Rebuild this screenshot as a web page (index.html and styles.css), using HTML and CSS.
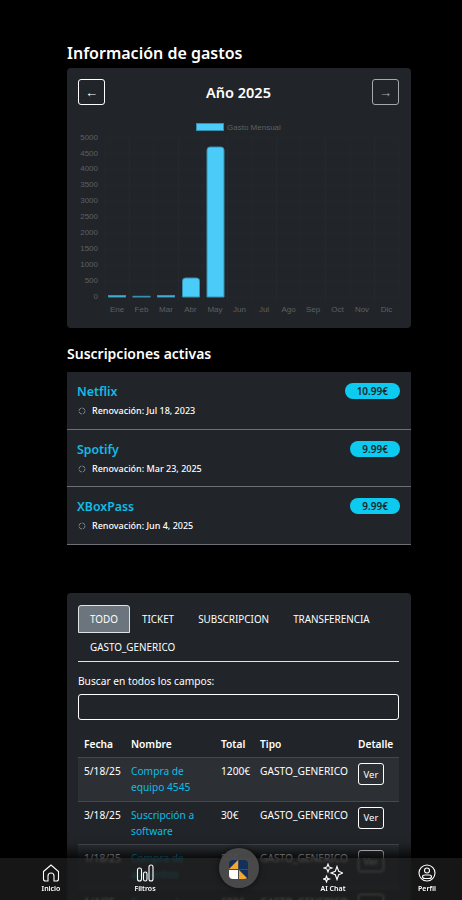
FILE: index.html
```html
<!DOCTYPE html>
<html lang="es">
<head>
  <meta charset="UTF-8" />
  <meta name="viewport" content="width=device-width, initial-scale=1.0"/>
  <title>Gastos</title>
  <link rel="stylesheet" href="styles.css">
</head>
<body>
  <main class="page">
    <h2 class="section-title first">Información de gastos</h2>

    <section class="card chart-card">
      <div class="year-bar">
        <button class="btn-outline">←</button>
        <h3 class="year-title">Año 2025</h3>
        <button class="btn-outline dim">→</button>
      </div>

      <!-- chart: plot area is x 27..321, y 22..182 -->
      <svg class="chart" width="322" height="206" viewBox="0 0 322 206">
        <g class="grid">
          <path d="M27 22H321M27 38H321M27 54H321M27 70H321M27 86H321M27 102H321M27 118H321M27 134H321M27 150H321M27 166H321M27 182H321"/>
          <path d="M27 22V186M51.500 22V186M76 22V186M100.500 22V186M125 22V186M149.500 22V186M174 22V186M198.500 22V186M223 22V186M247.500 22V186M272 22V186M296.500 22V186M321 22V186"/>
        </g>
        <rect class="bar" x="118.500" y="8.500" width="27" height="7"/>
        <text class="legend" x="149" y="15">Gasto Mensual</text>
        <g class="y-label">
          <text x="20" y="25">5000</text>
          <text x="20" y="41">4500</text>
          <text x="20" y="56">4000</text>
          <text x="20" y="72">3500</text>
          <text x="20" y="88">3000</text>
          <text x="20" y="104">2500</text>
          <text x="20" y="120">2000</text>
          <text x="20" y="136">1500</text>
          <text x="20" y="152">1000</text>
          <text x="20" y="168">500</text>
          <text x="20" y="184">0</text>
        </g>
        <g class="x-label">
          <text x="39" y="197">Ene</text>
          <text x="63.500" y="197">Feb</text>
          <text x="88" y="197">Mar</text>
          <text x="112.500" y="197">Abr</text>
          <text x="137" y="197">May</text>
          <text x="161.500" y="197">Jun</text>
          <text x="186" y="197">Jul</text>
          <text x="210.500" y="197">Ago</text>
          <text x="235" y="197">Sep</text>
          <text x="259.500" y="197">Oct</text>
          <text x="284" y="197">Nov</text>
          <text x="308.500" y="197">Dic</text>
        </g>
        <rect class="bar" x="30.500" y="180.500" width="17" height="1.500"/>
        <rect class="bar" x="55" y="181.300" width="17" height="0.700"/>
        <rect class="bar" x="79.500" y="180.500" width="17" height="1.500"/>
        <path class="bar" d="M104.500 182V166a3 3 0 0 1 3-3h11a3 3 0 0 1 3 3v16z"/>
        <path class="bar" d="M129 182V35a3 3 0 0 1 3-3h11a3 3 0 0 1 3 3v147z"/>
      </svg>
    </section>

    <h2 class="section-title small">Suscripciones activas</h2>

    <section class="subs">
      <div class="sub-row">
        <div class="sub-top">
          <span class="sub-name">Netflix</span>
          <span class="badge">10.99€</span>
        </div>
        <div class="sub-date">
          <svg class="spin" width="8" height="8" viewBox="0 0 8 8"><circle cx="4" cy="4" r="3" stroke-dasharray="3.700 1"/></svg>
          Renovación: Jul 18, 2023
        </div>
      </div>
      <div class="sub-row">
        <div class="sub-top">
          <span class="sub-name">Spotify</span>
          <span class="badge">9.99€</span>
        </div>
        <div class="sub-date">
          <svg class="spin" width="8" height="8" viewBox="0 0 8 8"><circle cx="4" cy="4" r="3" stroke-dasharray="3.700 1"/></svg>
          Renovación: Mar 23, 2025
        </div>
      </div>
      <div class="sub-row">
        <div class="sub-top">
          <span class="sub-name">XBoxPass</span>
          <span class="badge">9.99€</span>
        </div>
        <div class="sub-date">
          <svg class="spin" width="8" height="8" viewBox="0 0 8 8"><circle cx="4" cy="4" r="3" stroke-dasharray="3.700 1"/></svg>
          Renovación: Jun 4, 2025
        </div>
      </div>
    </section>

    <section class="card table-card">
      <ul class="tabs">
        <li class="tab active">TODO</li>
        <li class="tab">TICKET</li>
        <li class="tab">SUBSCRIPCION</li>
        <li class="tab">TRANSFERENCIA</li>
        <li class="tab">GASTO_GENERICO</li>
      </ul>

      <label class="search-label" for="search">Buscar en todos los campos:</label>
      <input class="search-input" type="text" id="search" />

      <table class="expenses">
        <thead>
          <tr>
            <th class="col-date">Fecha</th>
            <th class="col-name">Nombre</th>
            <th class="col-total">Total</th>
            <th class="col-type">Tipo</th>
            <th class="col-detail">Detalle</th>
          </tr>
        </thead>
        <tbody>
          <tr class="striped">
            <td>5/18/25</td>
            <td class="link">Compra de equipo 4545</td>
            <td>1200€</td>
            <td>GASTO_GENERICO</td>
            <td><button class="btn-outline btn-small">Ver</button></td>
          </tr>
          <tr>
            <td>3/18/25</td>
            <td class="link">Suscripción a software</td>
            <td>30€</td>
            <td>GASTO_GENERICO</td>
            <td><button class="btn-outline btn-small">Ver</button></td>
          </tr>
          <tr class="striped">
            <td>1/18/25</td>
            <td class="link">Compra de alimentos</td>
            <td>50€</td>
            <td>GASTO_GENERICO</td>
            <td><button class="btn-outline btn-small">Ver</button></td>
          </tr>
          <tr>
            <td>1/4/25</td>
            <td class="link">Compra de ropa</td>
            <td>600€</td>
            <td>GASTO_GENERICO</td>
            <td><button class="btn-outline btn-small">Ver</button></td>
          </tr>
        </tbody>
      </table>
    </section>
  </main>

  <nav class="bottom-nav">
    <a class="nav-item">
      <svg width="20" height="20" viewBox="0 0 20 20"><path d="M2.500 8.500 10 2l7.500 6.500V16a2 2 0 0 1-2 2h-2.500v-5a3 3 0 0 0-6 0v5H4.500a2 2 0 0 1-2-2z"/></svg>
      <span>Inicio</span>
    </a>
    <a class="nav-item">
      <svg width="20" height="20" viewBox="0 0 20 20"><rect x="2.500" y="5" width="4" height="13" rx="2"/><rect x="8.500" y="9" width="3.500" height="9" rx="1.750"/><rect x="14" y="2" width="4" height="16" rx="2"/></svg>
      <span>Filtros</span>
    </a>
    <a class="nav-item nav-logo">
      <svg width="19" height="19" viewBox="0 0 19 19">
        <path class="logo-navy" d="M4 0h5v9H0V4a4 4 0 0 1 4-4z"/>
        <path class="logo-orange" d="M9 0v9H0z"/>
        <path class="logo-navy" d="M10 0h5a4 4 0 0 1 4 4v5h-9z"/>
        <path class="logo-white" d="M0 10h9v9H4a4 4 0 0 1-4-4z"/>
        <path class="logo-orange" d="M10 10h9v5a4 4 0 0 1-4 4h-5z"/>
        <path class="logo-navy" d="M10 10h9v9z"/>
      </svg>
    </a>
    <a class="nav-item">
      <svg width="20" height="20" viewBox="0 0 20 20"><path d="M14 3.500 15.700 8.300 20 10 15.700 11.700 14 16.500 12.300 11.700 8 10 12.300 8.300z"/><path d="M5 1 6.100 3.900 9 5 6.100 6.100 5 9 3.900 6.100 1 5 3.900 3.900z"/><path d="M3.500 13 4.300 15.200 6.500 16 4.300 16.800 3.500 19 2.700 16.800 .5 16 2.700 15.200z"/></svg>
      <span>AI Chat</span>
    </a>
    <a class="nav-item">
      <svg width="20" height="20" viewBox="0 0 20 20"><circle cx="10" cy="10" r="8"/><circle cx="10" cy="7.500" r="2.500"/><path d="M5.500 13.500c0-1 1-1.500 2.500-1.500h4c1.500 0 2.500.5 2.500 1.500 0 1.500-1 2-2.500 2H8c-1.500 0-2.500-.5-2.500-2z"/></svg>
      <span>Perfil</span>
    </a>
  </nav>
</body>
</html>
```

FILE: styles.css
```css
* {
  box-sizing: border-box;
}

html, body {
  height: 100vh;
  margin: 0;
  overflow: hidden;
}

body {
  background-color: #000;
  color: #fff;
  font-family: "Noto Sans", "Open Sans", sans-serif;
  font-size: 11px;
}

.page {
  width: 344px;
  margin-left: 67px;
}

.section-title {
  margin: 0;
  font-size: 16px;
  font-weight: 600;
  line-height: 22px;
}

.section-title.first {
  padding-top: 42px;
  margin-bottom: 4px;
}

.section-title.small {
  margin-top: 15px;
  margin-bottom: 7px;
  font-size: 14px;
}

.card {
  background-color: #212529;
  border-radius: 4px;
}

/* Chart card */
.chart-card {
  height: 260px;
  padding: 11px 12px 0 11px;
}

.year-bar {
  display: flex;
  align-items: center;
  justify-content: space-between;
}

.year-title {
  margin: 0;
  font-size: 14.500px;
  font-weight: 600;
}

.btn-outline {
  width: 27px;
  height: 26px;
  padding: 0;
  border: 1px solid #fff;
  border-radius: 3px;
  background: transparent;
  color: #fff;
  font-family: inherit;
  font-size: 13px;
}

.btn-outline.dim {
  opacity: 0.6;
}

.chart {
  display: block;
  margin-top: 10px;
}

.grid path {
  fill: none;
  stroke: #25292d;
  stroke-width: 1;
}

.bar {
  fill: #4bcbf8;
  stroke: #368fb0;
  stroke-width: 1;
}

.legend,
.y-label text,
.x-label text {
  fill: #5c6064;
  font-family: "Liberation Sans", sans-serif;
  font-size: 8px;
}

.y-label text {
  text-anchor: end;
}

.x-label text {
  text-anchor: middle;
}

/* Subscriptions */
.subs {
  background-color: #212529;
}

.sub-row {
  height: 57.700px;
  padding: 11px 11px 0 10px;
  border-bottom: 1px solid #6c6f73;
}

.sub-top {
  display: flex;
  align-items: flex-start;
  justify-content: space-between;
}

.sub-name {
  color: #10bce6;
  font-size: 12.300px;
  font-weight: 600;
  line-height: 18px;
}

.badge {
  height: 16px;
  padding: 0 12px;
  border-radius: 8px;
  background-color: #0dcaf0;
  color: #212529;
  font-size: 10px;
  font-weight: 600;
  line-height: 16px;
}

.sub-date {
  display: flex;
  align-items: center;
  gap: 6px;
  margin-top: 3px;
  padding-left: 1px;
  font-size: 9px;
  font-weight: 500;
  line-height: 14px;
}

.spin circle {
  fill: none;
  stroke: #7c858d;
  stroke-width: 1;
}

/* Table card */
.table-card {
  margin-top: 48px;
  padding: 12px 12px 12px 11px;
}

.tabs {
  display: flex;
  flex-wrap: wrap;
  margin: 0 0 12px;
  padding: 0;
  list-style: none;
  border-bottom: 1px solid #dee2e6;
}

.tab {
  height: 28px;
  padding: 0 12px;
  font-size: 9.900px;
  line-height: 28px;
}

.tab.active {
  border: 1px solid #dee2e6;
  border-radius: 3px 3px 0 0;
  background-color: #6c757d;
  line-height: 26px;
  padding: 0 11px;
}

.search-label {
  display: block;
  font-size: 10.200px;
  line-height: 14px;
}

.search-input {
  display: block;
  width: 100%;
  height: 26px;
  margin-top: 6px;
  border: 1px solid #fff;
  border-radius: 3px;
  background-color: #212529;
}

.expenses {
  width: 100%;
  margin-top: 15px;
  border-collapse: collapse;
  table-layout: fixed;
  font-size: 10.200px;
}

.expenses th {
  padding: 0 0 4px 6px;
  border-bottom: 1px solid #45494d;
  font-weight: 600;
  line-height: 18px;
  text-align: left;
  white-space: nowrap;
}

.expenses td {
  height: 43.500px;
  padding: 5px 0 5px 6px;
  border-bottom: 1px solid #45494d;
  line-height: 16px;
  vertical-align: top;
}

.striped td {
  background-color: #2c3034;
}

.col-date { width: 47px; }
.col-name { width: 90px; }
.col-total { width: 39px; }
.col-type { width: 98px; }
.col-detail { width: 47px; }

.link {
  color: #10bce6;
}

.btn-small {
  width: 26px;
  height: 22px;
  font-size: 9.500px;
}

/* Bottom navigation */
.bottom-nav {
  position: fixed;
  left: 4px;
  bottom: 0;
  display: grid;
  grid-template-columns: repeat(5, 94px);
  height: 42px;
}

.bottom-nav::before {
  content: "";
  position: fixed;
  left: 0;
  right: 0;
  bottom: 0;
  height: 42px;
  background-color: rgba(28, 28, 28, 0.8);
  backdrop-filter: blur(1px);
  box-shadow: 0 -6px 12px rgba(0, 0, 0, 0.9);
}

.nav-item {
  position: relative;
  display: flex;
  flex-direction: column;
  align-items: center;
  padding-top: 5px;
  font-size: 7px;
  font-weight: 600;
  line-height: 9px;
}

.nav-item svg {
  margin-bottom: 1px;
  fill: none;
  stroke: #fff;
  stroke-width: 1.100;
}

.nav-logo {
  padding-top: 0;
}

.nav-logo::before {
  content: "";
  position: absolute;
  top: -10px;
  left: 27px;
  width: 40px;
  height: 40px;
  border-radius: 50%;
  background-color: rgba(78, 78, 78, 0.9);
  box-shadow: 0 0 6px rgba(0, 0, 0, 0.6);
}

.nav-logo svg {
  position: absolute;
  top: 2px;
  left: 37px;
  stroke: none;
}

.logo-navy { fill: #12305a; }
.logo-orange { fill: #f0a830; }
.logo-white { fill: #fff; }
```
